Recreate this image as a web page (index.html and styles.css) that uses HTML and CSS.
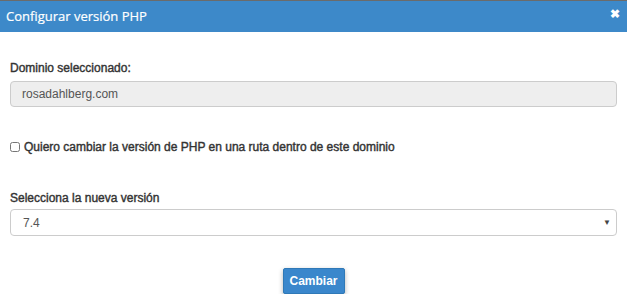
FILE: index.html
```html
<!DOCTYPE html>
<html>
<head>
	<meta charset="UTF-8"/>
	<title>Configurar versión PHP</title>
	<link rel="stylesheet" href="styles.css">
</head>
<body>
	<div class="modal">
		<div class="modal-header">
			<span class="modal-title">Configurar versión PHP</span>
			<span class="close">&#10006;</span>
		</div>
		<div class="modal-body">
			<label class="label">Dominio seleccionado:</label>
			<input type="text" class="form-control" value="rosadahlberg.com" disabled />

			<label class="check-row">
				<input type="checkbox" class="checkbox" />
				Quiero cambiar la versión de PHP en una ruta dentro de este dominio
			</label>

			<label class="label">Selecciona la nueva versión</label>
			<div class="select">
				<span>7.4</span>
				<span class="caret">&#9660;</span>
			</div>

			<div class="actions">
				<button type="button" class="btn">Cambiar</button>
			</div>
		</div>
	</div>
</body>
</html>
```

FILE: styles.css
```css
body {
	margin: 0;
	background: #fff;
	font: normal 12px "Liberation Sans", Arial, sans-serif;
	color: #333;
}
.modal {
	border-top: 1px solid #6b6b6b;
}
.modal-header {
	height: 31px;
	background-color: #3d89c9;
	display: flex;
	align-items: center;
	justify-content: space-between;
	padding: 0 7px 0 6px;
}
.modal-title {
	font: normal 13px "Open Sans", sans-serif;
	color: #fff;
	-webkit-text-stroke: 0.2px #fff;
	margin-top: -2px;
}
.close {
	color: #fff;
	font-size: 12px;
	font-weight: bold;
	margin-top: -6px;
}
.modal-body {
	padding: 29px 10px 0 10px;
	display: flex;
	flex-direction: column;
}
.label {
	color: #333;
	-webkit-text-stroke: 0.4px #333;
	margin-bottom: 6px;
}
.form-control {
	height: 26px;
	box-sizing: border-box;
	border: 1px solid #ccc;
	border-radius: 4px;
	background-color: #eee;
	padding: 0 11px;
	font: normal 12px "Liberation Sans", Arial, sans-serif;
	color: #555;
	margin: 0;
}
.check-row {
	display: flex;
	align-items: center;
	-webkit-text-stroke: 0.4px #333;
	margin-top: 33px;
	margin-bottom: 37px;
}
.checkbox {
	width: 10px;
	height: 10px;
	margin: 0 4px 0 0;
}
.select {
	height: 27px;
	box-sizing: border-box;
	border: 1px solid #ccc;
	border-radius: 4px;
	display: flex;
	align-items: center;
	justify-content: space-between;
	padding: 0 5px 0 12px;
	color: #555;
	margin-top: -2px;
}
.caret {
	font-size: 8px;
	color: #444;
}
.actions {
	display: flex;
	justify-content: center;
	margin-top: 32px;
}
.btn {
	width: 62px;
	height: 26px;
	border: 1px solid #2f79b7;
	border-radius: 2px;
	background-color: #3a87cc;
	color: #fff;
	font: bold 12px "Liberation Sans", Arial, sans-serif;
	box-shadow: 0 2px 5px rgba(0,0,0,0.3);
}
```
